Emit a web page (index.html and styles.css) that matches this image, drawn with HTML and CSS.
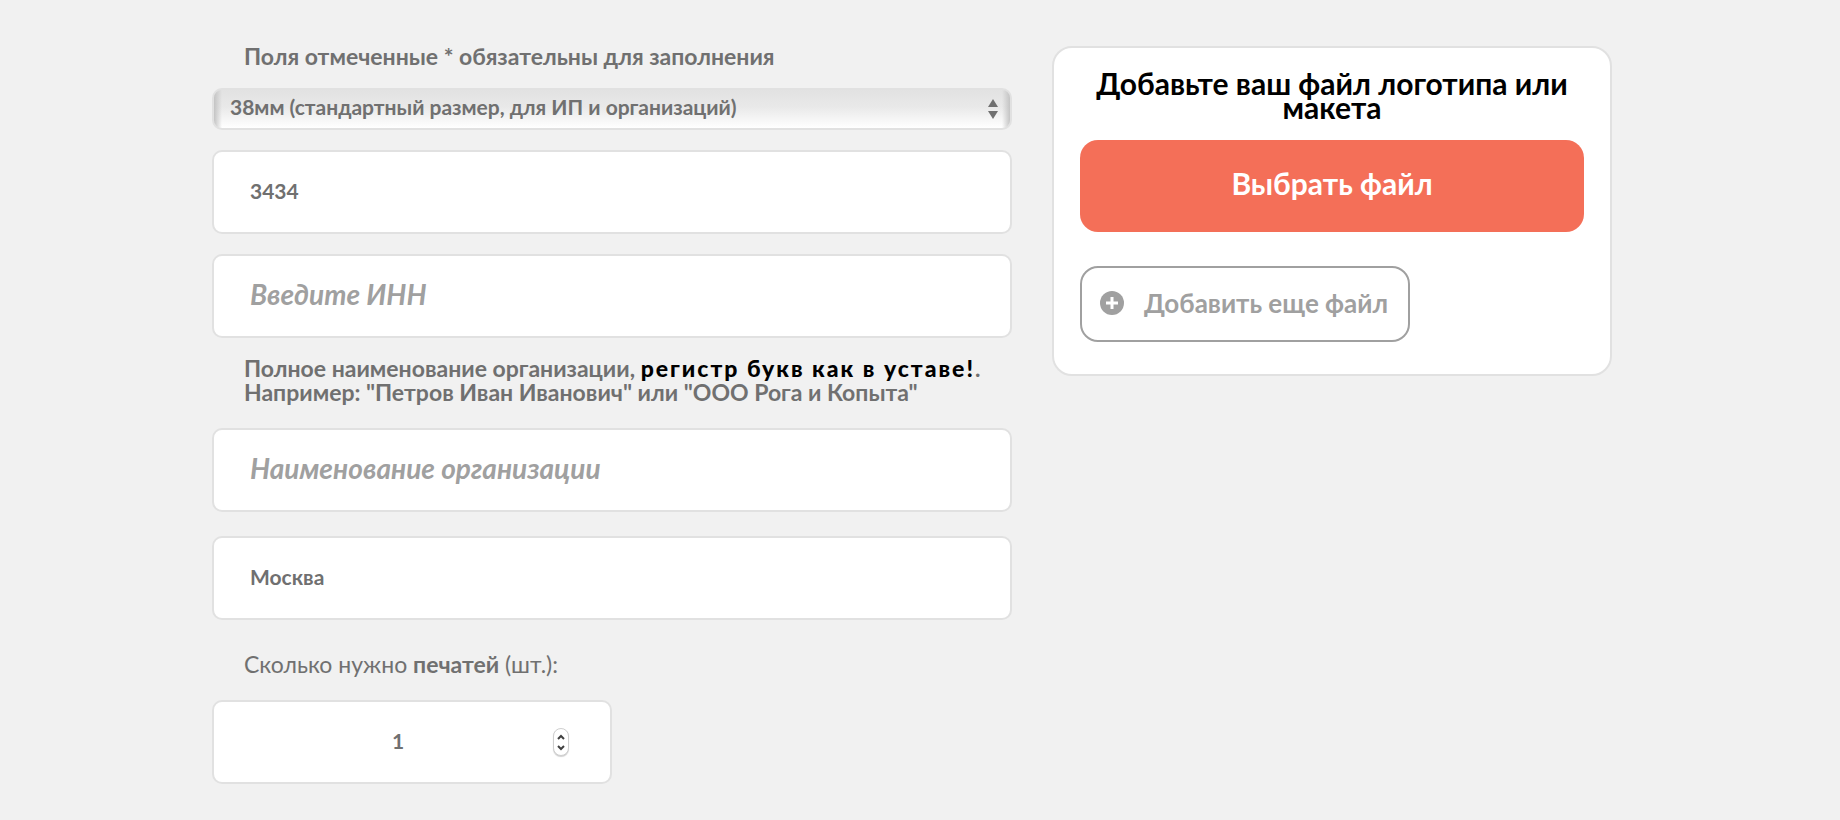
FILE: index.html
```html
<!DOCTYPE html>
<html lang="ru">
<head>
<meta charset="utf-8">
<meta name="viewport" content="width=device-width, initial-scale=1">
<title>Заказ печати</title>
<link rel="stylesheet" href="styles.css">
</head>
<body>
<main class="order">
  <form class="details" id="order-form">
    <label class="caption note" for="size">Поля отмеченные * обязательны для заполнения</label>
    <div class="picker">
      <select class="picker-select" id="size">
        <option>38мм (стандартный размер, для ИП и организаций)</option>
      </select>
      <svg class="picker-arrows" viewBox="0 0 10 20" aria-hidden="true"><path d="M5 0 10 8H0zM0 12h10l-5 8z"/></svg>
    </div>
    <input class="field" type="text" value="3434" aria-label="Номер">
    <input class="field" type="text" placeholder="Введите ИНН" aria-label="ИНН">
    <label class="caption hint" for="company">Полное наименование организации, <strong class="accent">регистр букв как в уставе!</strong>.<br>Например: "Петров Иван Иванович" или "ООО Рога и Копыта"</label>
    <input class="field" id="company" type="text" placeholder="Наименование организации">
    <input class="field city" type="text" value="Москва" aria-label="Город">
    <label class="caption amount-label" for="amount">Сколько нужно <strong>печатей</strong> (шт.):</label>
    <div class="amount">
      <input class="field amount-input" id="amount" type="number" value="1" min="1">
      <div class="stepper">
        <button class="step" type="button" aria-label="Больше"><svg viewBox="0 0 8 6" aria-hidden="true"><path d="M1 5l3-3 3 3"/></svg></button>
        <button class="step" type="button" aria-label="Меньше"><svg viewBox="0 0 8 6" aria-hidden="true"><path d="M1 1l3 3 3-3"/></svg></button>
      </div>
    </div>
  </form>
  <section class="upload">
    <h2 class="upload-title">Добавьте ваш файл логотипа или макета</h2>
    <button class="choose" type="button">Выбрать файл</button>
    <button class="more" type="button">
      <svg class="plus" viewBox="0 0 24 24" aria-hidden="true"><circle cx="12" cy="12" r="12"/><path d="M12 6v12M6 12h12"/></svg>
      Добавить еще файл
    </button>
  </section>
</main>
</body>
</html>
```
FILE: styles.css
```css
* { box-sizing: border-box; }

body {
  margin: 0;
  padding: 44px 16px 32px 0;
  background: #f1f1f1;
  color: #707070;
  font-family: Lato, "Open Sans", sans-serif;
  font-size: 23px;
  line-height: 24px;
}

button, input, select { font-family: inherit; color: inherit; }

.order {
  display: grid;
  grid-template-columns: minmax(0, 10fr) minmax(0, 7fr);
  gap: 40px;
  align-items: start;
  max-width: 1400px;
  margin: 0 auto;
}

.details { display: flex; flex-direction: column; }

.caption { padding-left: 32px; font-weight: 700; }
.note { margin-bottom: 20px; }
.hint { margin: 18px 0 24px; }
.accent { color: #000; font-weight: 900; letter-spacing: 2px; }
.amount-label { margin: 32px 0 24px; font-weight: 400; }

.picker { position: relative; margin-bottom: 20px; }
.picker-select {
  display: block;
  width: 100%;
  height: 42px;
  padding: 0 40px 6px 16px;
  appearance: none;
  border: 2px solid #e1e1e1;
  border-radius: 10px;
  background:
    linear-gradient(90deg, #c4c4c4, #c4c4c400 8px, #c4c4c400 calc(100% - 8px), #c4c4c4),
    linear-gradient(#e2e2e2, #e9e9e9 45%, #ffffff);
  font-size: 21px;
  font-weight: 700;
}
.picker-arrows {
  position: absolute;
  top: 11px;
  right: 14px;
  width: 10px;
  height: 20px;
  fill: #707070;
  pointer-events: none;
}

.field {
  width: 100%;
  height: 84px;
  padding: 0 36px 4px;
  border: 2px solid #e1e1e1;
  border-radius: 10px;
  background: #fff;
  font-size: 21px;
  font-weight: 700;
}
.field + .field { margin-top: 20px; }
.field + .city { margin-top: 24px; }
.field::placeholder { color: #a0a0a0; font-size: 28px; font-style: italic; opacity: 1; }
.field:placeholder-shown { padding-bottom: 0; }

.amount { position: relative; width: 50%; }
.amount-input {
  display: block;
  padding-right: 64px;
  text-align: center;
  appearance: textfield;
}
.amount-input::-webkit-inner-spin-button { display: none; }
.stepper {
  position: absolute;
  top: 28px;
  right: 43px;
  display: flex;
  flex-direction: column;
  justify-content: center;
  gap: 5px;
  width: 16px;
  height: 28px;
  border: 1px solid #cfcfcf;
  border-radius: 8px;
  background: #fff;
  box-shadow: 0 1px 1px #00000030;
}
.step { display: flex; justify-content: center; padding: 0; border: 0; background: none; }
.step svg { width: 8px; height: 6px; fill: none; stroke: #404040; stroke-width: 2; }

.upload {
  display: flex;
  flex-direction: column;
  align-items: flex-start;
  margin-top: 2px;
  padding: 23px 26px 32px;
  border: 2px solid #e1e1e1;
  border-radius: 20px;
  background: #fff;
}
.upload-title {
  align-self: stretch;
  margin: 0 0 21px;
  color: #000;
  font-size: 30px;
  font-weight: 700;
  line-height: 24px;
  text-align: center;
}
.choose {
  align-self: stretch;
  height: 92px;
  margin-bottom: 34px;
  padding: 0 16px 6px;
  border: 0;
  border-radius: 18px;
  background: #f46f58;
  color: #fff;
  font-size: 30px;
  font-weight: 700;
}
.more {
  display: flex;
  align-items: center;
  gap: 20px;
  height: 76px;
  padding: 0 20px 2px 18px;
  border: 2px solid #a0a0a0;
  border-radius: 18px;
  background: #fff;
  color: #a0a0a0;
  font-size: 26px;
  font-weight: 700;
}
.plus { width: 24px; height: 24px; fill: #a0a0a0; stroke: none; }
.plus path { stroke: #fff; stroke-width: 3; }
```
